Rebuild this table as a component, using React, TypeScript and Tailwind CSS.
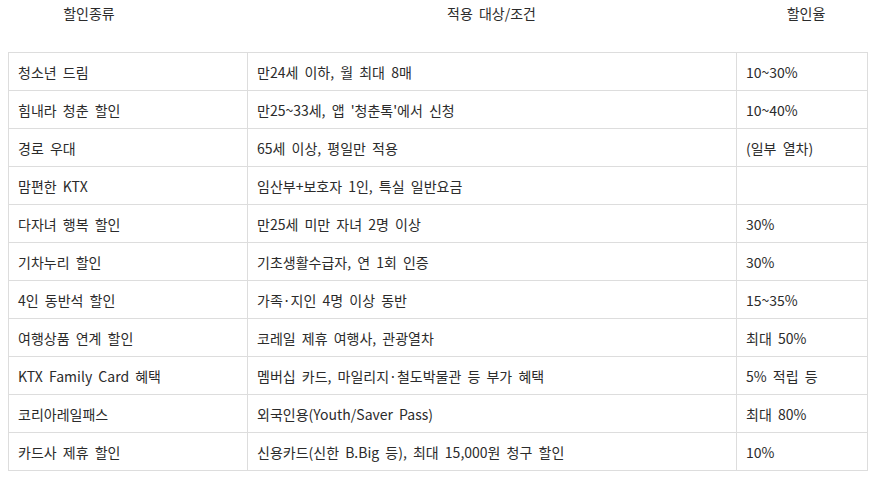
const ROWS = [
  { name: '청소년 드림', target: '만24세 이하, 월 최대 8매', rate: '10~30%' },
  { name: '힘내라 청춘 할인', target: "만25~33세, 앱 '청춘톡'에서 신청", rate: '10~40%' },
  { name: '경로 우대', target: '65세 이상, 평일만 적용', rate: '(일부 열차)' },
  { name: '맘편한 KTX', target: '임산부+보호자 1인, 특실 일반요금', rate: '' },
  { name: '다자녀 행복 할인', target: '만25세 미만 자녀 2명 이상', rate: '30%' },
  { name: '기차누리 할인', target: '기초생활수급자, 연 1회 인증', rate: '30%' },
  { name: '4인 동반석 할인', target: '가족·지인 4명 이상 동반', rate: '15~35%' },
  { name: '여행상품 연계 할인', target: '코레일 제휴 여행사, 관광열차', rate: '최대 50%' },
  { name: 'KTX Family Card 혜택', target: '멤버십 카드, 마일리지·철도박물관 등 부가 혜택', rate: '5% 적립 등' },
  { name: '코리아레일패스', target: '외국인용(Youth/Saver Pass)', rate: '최대 80%' },
  { name: '카드사 제휴 할인', target: '신용카드(신한 B.Big 등), 최대 15,000원 청구 할인', rate: '10%' },
];

export default function App() {
  return (
    <div
      className="w-[875px] h-[479px] bg-white px-2 text-[14px] text-[#2b2b2b] [word-spacing:3px]"
      style={{ fontFamily: '"Noto Sans CJK KR", "Noto Sans", sans-serif' }}
    >
      {/* Header labels */}
      <div className="grid grid-cols-[239px_489px_131px] h-[27px] items-center mb-[25px]">
        <div className="text-center pr-[77px]">할인종류</div>
        <div className="text-center">적용 대상/조건</div>
        <div className="text-center pl-[9px]">할인율</div>
      </div>

      <table className="w-[859px] border-collapse table-fixed">
        <colgroup>
          <col className="w-[239px]" />
          <col className="w-[489px]" />
          <col className="w-[131px]" />
        </colgroup>
        <tbody>
          {ROWS.map(r => (
            <tr key={r.name} className="h-[38px]">
              <td className="border border-[#ddd] px-[9px] leading-none">{r.name}</td>
              <td className="border border-[#ddd] px-[9px] leading-none">{r.target}</td>
              <td className="border border-[#ddd] px-[9px] leading-none">{r.rate}</td>
            </tr>
          ))}
        </tbody>
      </table>
    </div>
  );
}
